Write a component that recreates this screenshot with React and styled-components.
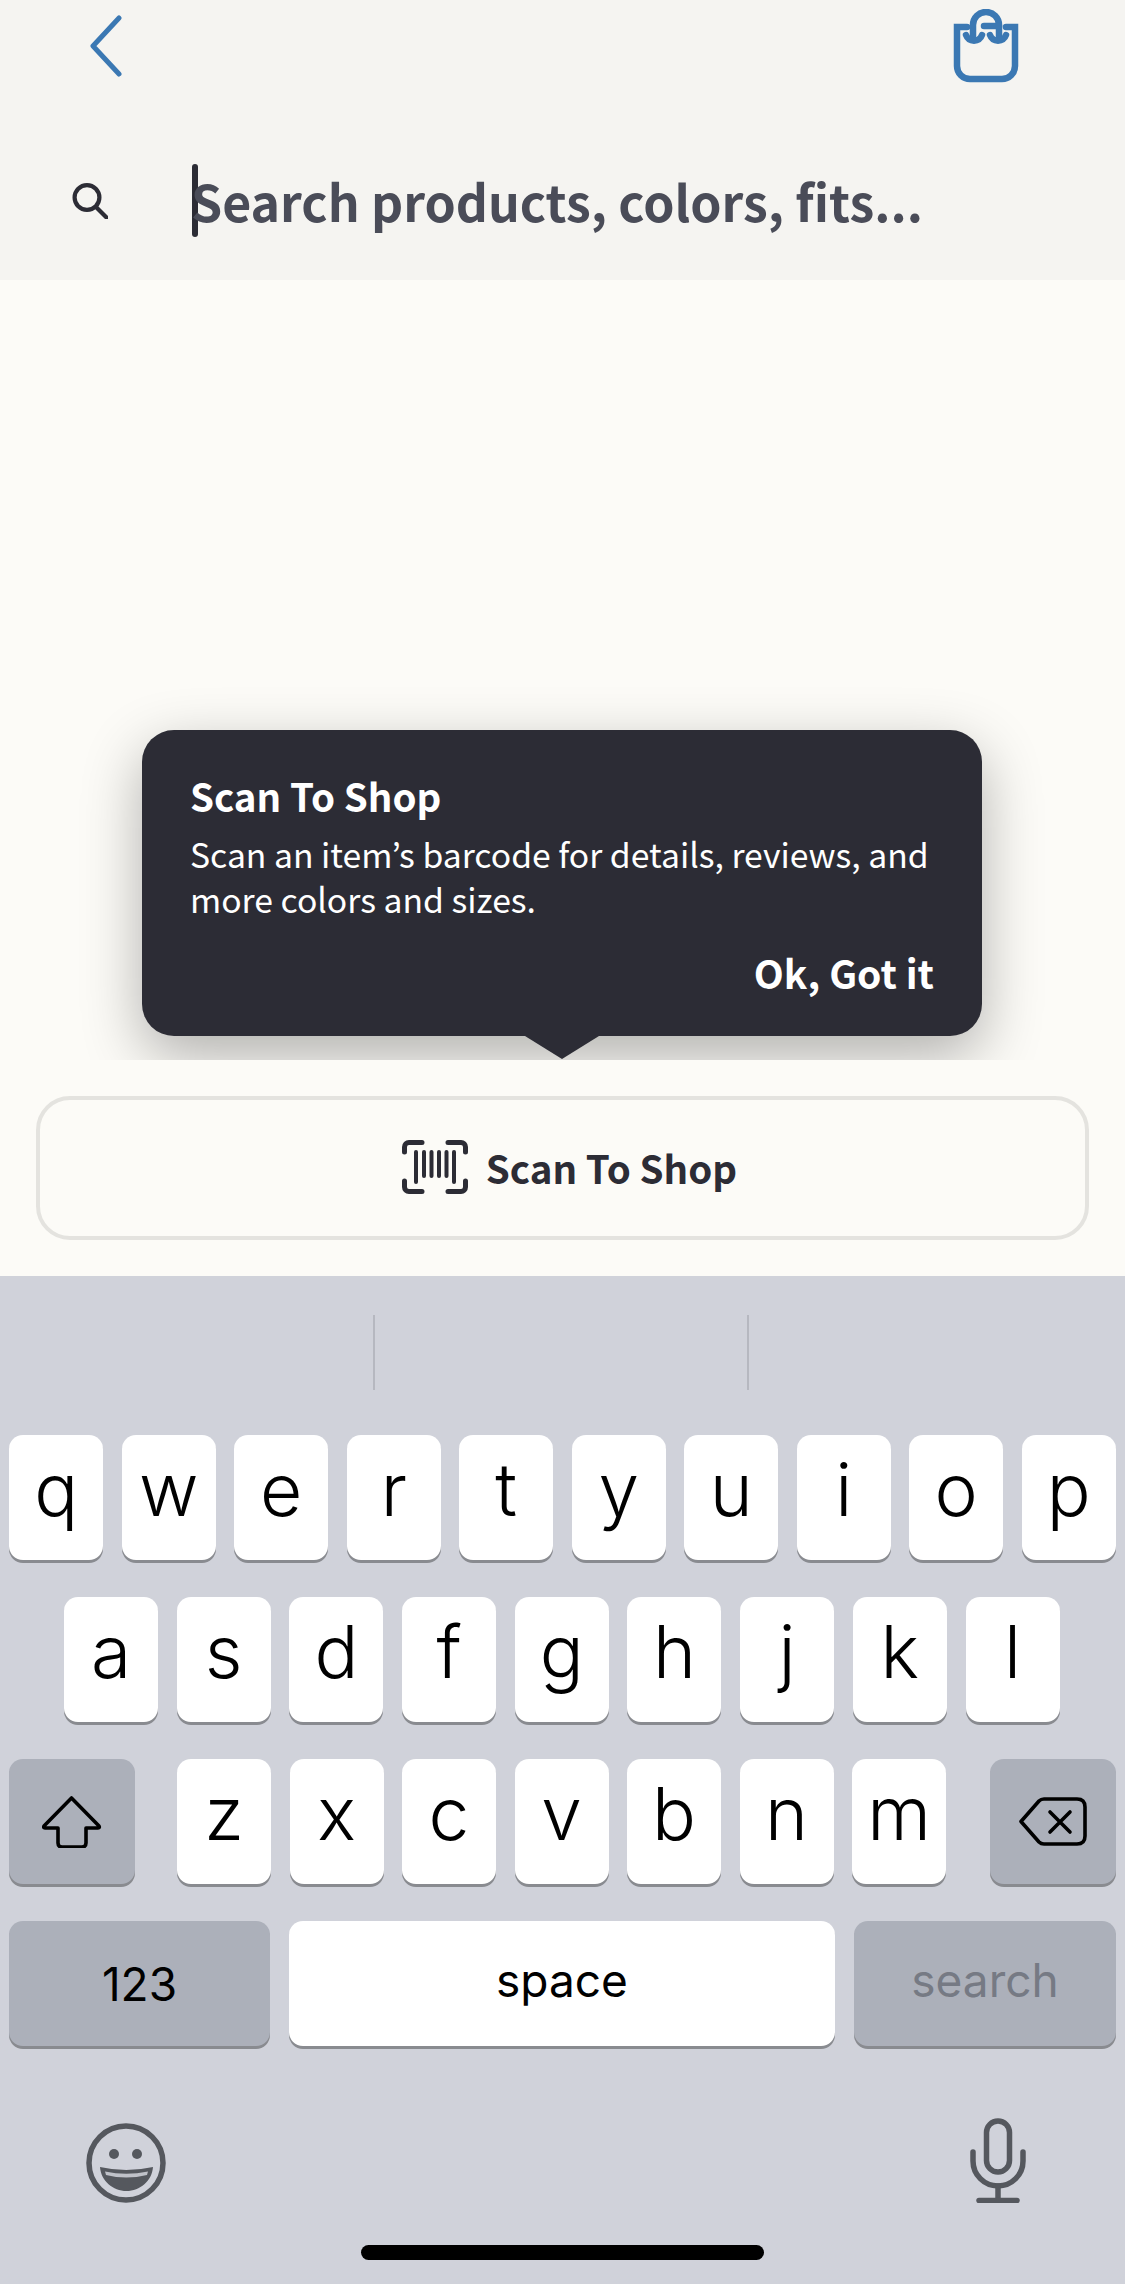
import React from 'react';
import styled, { createGlobalStyle } from 'styled-components';

const GlobalStyle = createGlobalStyle`
    html, body {
        margin: 0;
        padding: 0;
        background: #f5f4f1;
    }
    * { box-sizing: border-box; }
`;

const brandFont = `"Noto Sans CJK JP", "Open Sans", sans-serif`;
const keyFont = `Inter, "Liberation Sans", sans-serif`;

const ROW_ONE = ['q', 'w', 'e', 'r', 't', 'y', 'u', 'i', 'o', 'p'];
const ROW_TWO = ['a', 's', 'd', 'f', 'g', 'h', 'j', 'k', 'l'];
const ROW_THREE = ['z', 'x', 'c', 'v', 'b', 'n', 'm'];

const Page = styled.div`
    width: 1125px;
    height: 2284px;
    overflow: hidden;
    display: flex;
    flex-direction: column;
`;

const Header = styled.header`
    height: 280px;
    padding-top: 10px;
    background: #f5f4f1;
`;

const TopBar = styled.div`
    height: 72px;
    padding: 0 106px 0 90px;
    display: flex;
    align-items: center;
    justify-content: space-between;
`;

const SearchRow = styled.div`
    height: 73px;
    margin-top: 82px;
    padding-left: 72px;
    display: flex;
    align-items: center;
`;

const Caret = styled.span`
    width: 6px;
    height: 73px;
    margin-left: 84px;
    border-radius: 3px;
    background: #2c2c35;
`;

const Placeholder = styled.span`
    margin-left: -7px;
    font-family: ${brandFont};
    font-size: 50px;
    font-weight: 700;
    line-height: 73px;
    color: #4a4c58;
    white-space: nowrap;
`;

const Body = styled.main`
    position: relative;
    height: 780px;
    background: #fcfbf7;
`;

const Tooltip = styled.div`
    position: absolute;
    top: 450px;
    left: 142px;
    width: 840px;
    height: 306px;
    padding: 40px 48px 0;
    border-radius: 32px;
    background: #2c2c35;
    color: #ffffff;
    font-family: ${brandFont};
    box-shadow: 0 20px 60px rgba(0, 0, 0, 0.3);

    &::after {
        content: '';
        position: absolute;
        left: 383px;
        bottom: -23px;
        border-style: solid;
        border-width: 23px 37px 0;
        border-color: #2c2c35 transparent transparent;
    }
`;

const TooltipTitle = styled.div`
    font-size: 38.5px;
    font-weight: 700;
    line-height: 50px;
`;

const TooltipText = styled.p`
    margin: 11px 0 0;
    font-size: 33.7px;
    font-weight: 400;
    line-height: 45px;
    white-space: nowrap;
`;

const TooltipAction = styled.div`
    margin-top: 21px;
    font-size: 39px;
    font-weight: 700;
    line-height: 60px;
    text-align: right;
`;

const ScanPanel = styled.section`
    position: relative;
    height: 216px;
    padding: 36px 36px 0;
    background: #fcfbf7;
`;

const ScanButton = styled.div`
    height: 144px;
    padding: 0 0 2px 14px;
    border: 4px solid #e4e3df;
    border-radius: 34px;
    display: flex;
    align-items: center;
    justify-content: center;
    gap: 18px;
    font-family: ${brandFont};
    font-size: 38.5px;
    font-weight: 700;
    color: #2c2c35;
`;

const Keyboard = styled.section`
    flex: 1;
    background: #d0d2da;
    font-family: ${keyFont};
`;

const Suggestions = styled.div`
    height: 159px;
    padding: 39px 376px 0 373px;
    display: flex;
    justify-content: space-between;
`;

const Divider = styled.span`
    width: 2px;
    height: 75px;
    background: #b6b8c0;
`;

const KeyRows = styled.div`
    display: flex;
    flex-direction: column;
    gap: 37px;
    padding: 0 9px;
`;

const KeyRow = styled.div`
    display: flex;
    justify-content: ${(props) => props.$justify || 'center'};
    gap: ${(props) => props.$gap || 18.5}px;
    padding-right: ${(props) => props.$nudge || 0}px;
`;

const Key = styled.div`
    width: ${(props) => props.$width || 94}px;
    height: 125px;
    flex: none;
    border-radius: 14px;
    background: ${(props) => (props.$dark ? '#acb0ba' : '#ffffff')};
    box-shadow: 0 3px 0 #898b90;
    display: flex;
    align-items: center;
    justify-content: center;
    color: #000000;
`;

const LetterKey = styled(Key)`
    padding-bottom: 16px;
    font-size: 73px;
    font-weight: 300;
    line-height: 1;
`;

const LabelKey = styled(Key)`
    padding-bottom: ${(props) => props.$lift || 0}px;
    font-size: 46px;
    font-weight: 400;
    line-height: 1;
    color: ${(props) => props.$muted ? '#767a84' : '#000000'};
`;

const ShiftGroup = styled.div`
    display: flex;
    gap: 42px;
`;

const LetterGroup = styled.div`
    display: flex;
    gap: 18.5px;
`;

const BottomRow = styled.div`
    margin-top: 72px;
    height: 85px;
    padding: 0 99px 0 86px;
    display: flex;
    align-items: flex-end;
    justify-content: space-between;
`;

const HomeIndicator = styled.div`
    width: 403px;
    height: 15px;
    margin: 42px auto 0;
    border-radius: 8px;
    background: #000000;
`;

const BackIcon = () => (
    <svg width="32" height="62" viewBox="0 0 32 62" fill="none" stroke="#3b78b3" strokeWidth="5" strokeLinecap="round" strokeLinejoin="round">
        <path d="M29 3 L3 31 L29 59" />
    </svg>
);

const BagIcon = () => (
    <svg width="66" height="74" viewBox="9 9 66 74" fill="none" stroke="#3b78b3" strokeWidth="6.5" strokeLinecap="round">
        <path d="M23 27 H13 V66 A13 13 0 0 0 26 79 H58 A13 13 0 0 0 71 66 V27 H62" />
        <path d="M29 36 V25 A13 13 0 0 1 55 25 V36" />
        <path d="M40 26 H55" />
        <path d="M22 35 A8.5 8.5 0 0 0 38 35" />
        <path d="M46 35 A8.5 8.5 0 0 0 62 35" />
    </svg>
);

const SearchIcon = () => (
    <svg width="36" height="36" viewBox="0 0 36 36" fill="none" stroke="#2c2c35" strokeWidth="4.2" strokeLinecap="round">
        <circle cx="15" cy="14.5" r="12.4" />
        <path d="M24 24 L34.5 34.5" />
    </svg>
);

const BarcodeIcon = () => (
    <svg width="66" height="54" viewBox="0 0 66 54" fill="none" stroke="#2c2c35" strokeWidth="5" strokeLinecap="round">
        <path d="M2.5 12 V7 A4.5 4.5 0 0 1 7 2.5 H20" />
        <path d="M46 2.5 H59 A4.5 4.5 0 0 1 63.5 7 V12" />
        <path d="M2.5 41 V47 A4.5 4.5 0 0 0 7 51.5 H20" />
        <path d="M46 51.5 H59 A4.5 4.5 0 0 0 63.5 47 V41" />
        <g strokeWidth="4">
            <path d="M14 12 V42" />
            <path d="M22 12 V36" />
            <path d="M29.5 12 V36" />
            <path d="M37 12 V36" />
            <path d="M44.5 12 V36" />
            <path d="M52 12 V42" />
        </g>
    </svg>
);

const ShiftIcon = () => (
    <svg width="60" height="52" viewBox="0 0 60 52" fill="none" stroke="#000000" strokeWidth="3.6" strokeLinejoin="round">
        <path d="M29.5 2 L2 30 Q1 32 3 32 H16 V47 Q16 51 20 51 H40 Q44 51 44 47 V32 H56 Q58 32 57 30 Z" />
    </svg>
);

const DeleteIcon = () => (
    <svg width="68" height="49" viewBox="0 0 68 49" fill="none" stroke="#000000" strokeWidth="3.6" strokeLinecap="round" strokeLinejoin="round">
        <path d="M2 24.5 L20 4 Q22 2 25 2 H58 Q66 2 66 10 V39 Q66 47 58 47 H25 Q22 47 20 45 Z" />
        <path d="M31 15 L51 35 M51 15 L31 35" />
    </svg>
);

const EmojiIcon = () => (
    <svg width="80" height="80" viewBox="0 0 80 80" fill="none">
        <circle cx="40" cy="40" r="37" stroke="#55585e" strokeWidth="5.5" />
        <circle cx="28" cy="31" r="5" fill="#55585e" />
        <circle cx="51" cy="31" r="5" fill="#55585e" />
        <path d="M14 44 Q40 50 67 44 C66 58 54 68 40.5 68 C27 68 15 58 14 44 Z" fill="#55585e" />
        <path d="M19 48.5 Q40 53 62 48.5 L61 52 Q40 57 20 52 Z" fill="#c0c2c9" />
    </svg>
);

const MicIcon = () => (
    <svg width="56" height="85" viewBox="0 0 56 85" fill="none" stroke="#55585e" strokeWidth="5.5" strokeLinecap="round">
        <rect x="16.5" y="3" width="23" height="51" rx="11.5" />
        <path d="M3 34 V43 A25 25 0 0 0 53 43 V34" />
        <path d="M28 68 V82" />
        <path d="M9 82.5 H47" />
    </svg>
);

const App = () => {
    return (
        <Page>
            <GlobalStyle />
            <Header>
                <TopBar>
                    <BackIcon />
                    <BagIcon />
                </TopBar>
                <SearchRow>
                    <SearchIcon />
                    <Caret />
                    <Placeholder>Search products, colors, fits...</Placeholder>
                </SearchRow>
            </Header>
            <Body>
                <Tooltip>
                    <TooltipTitle>Scan To Shop</TooltipTitle>
                    <TooltipText>
                        Scan an item’s barcode for details, reviews, and<br />
                        more colors and sizes.
                    </TooltipText>
                    <TooltipAction>Ok, Got it</TooltipAction>
                </Tooltip>
            </Body>
            <ScanPanel>
                <ScanButton>
                    <BarcodeIcon />
                    Scan To Shop
                </ScanButton>
            </ScanPanel>
            <Keyboard>
                <Suggestions>
                    <Divider />
                    <Divider />
                </Suggestions>
                <KeyRows>
                    <KeyRow>
                        {ROW_ONE.map((letter) => <LetterKey key={letter}>{letter}</LetterKey>)}
                    </KeyRow>
                    <KeyRow $gap={18.7} $nudge={1.5}>
                        {ROW_TWO.map((letter) => <LetterKey key={letter}>{letter}</LetterKey>)}
                    </KeyRow>
                    <KeyRow $justify="space-between">
                        <ShiftGroup>
                            <Key $dark $width={126}><ShiftIcon /></Key>
                            <LetterGroup>
                                {ROW_THREE.map((letter) => <LetterKey key={letter}>{letter}</LetterKey>)}
                            </LetterGroup>
                        </ShiftGroup>
                        <Key $dark $width={126}><DeleteIcon /></Key>
                    </KeyRow>
                    <KeyRow $justify="space-between">
                        <LabelKey $dark $width={261}>123</LabelKey>
                        <LabelKey $width={546} $lift={7}>space</LabelKey>
                        <LabelKey $dark $muted $width={262} $lift={7}>search</LabelKey>
                    </KeyRow>
                </KeyRows>
                <BottomRow>
                    <EmojiIcon />
                    <MicIcon />
                </BottomRow>
                <HomeIndicator />
            </Keyboard>
        </Page>
    );
};

export default App;
